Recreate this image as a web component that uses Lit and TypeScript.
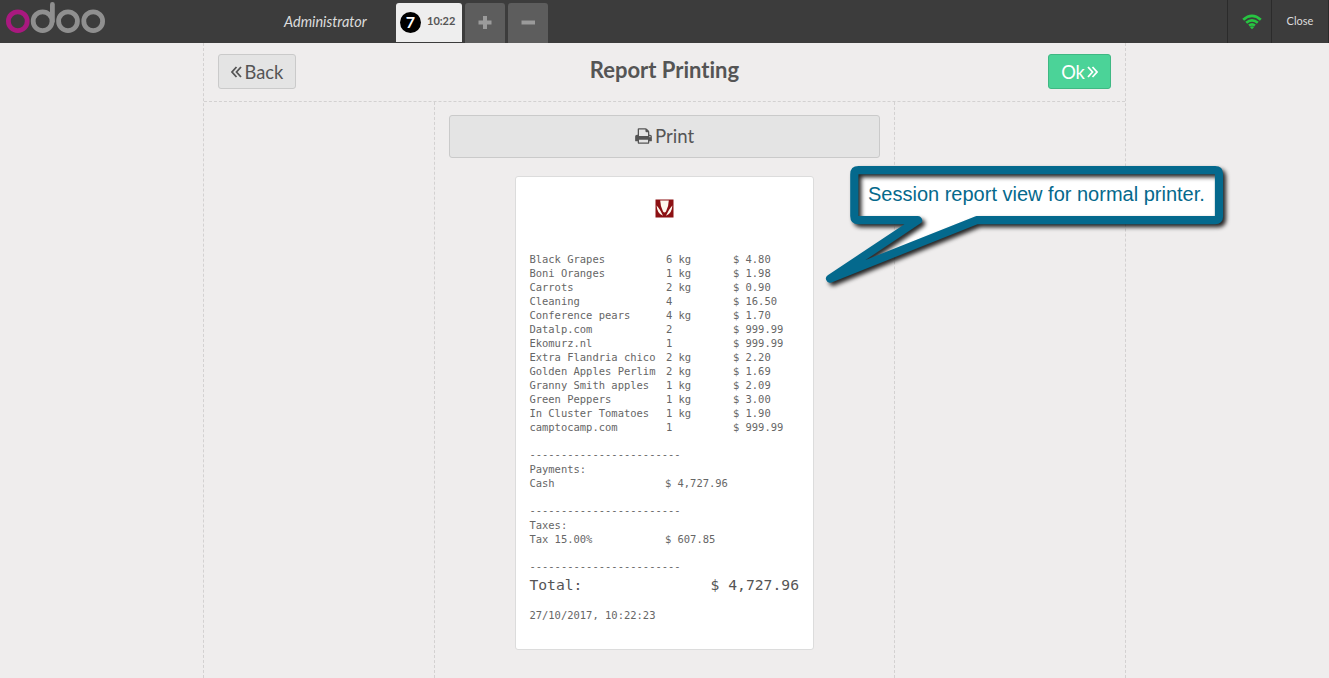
import { LitElement, html, css, svg } from "lit";
import { customElement } from "lit/decorators.js";

interface Line {
  name: string;
  qty: string;
  price: string;
}

const LINES: Line[] = [
  { name: "Black Grapes", qty: "6 kg", price: "$ 4.80" },
  { name: "Boni Oranges", qty: "1 kg", price: "$ 1.98" },
  { name: "Carrots", qty: "2 kg", price: "$ 0.90" },
  { name: "Cleaning", qty: "4", price: "$ 16.50" },
  { name: "Conference pears", qty: "4 kg", price: "$ 1.70" },
  { name: "Datalp.com", qty: "2", price: "$ 999.99" },
  { name: "Ekomurz.nl", qty: "1", price: "$ 999.99" },
  { name: "Extra Flandria chico", qty: "2 kg", price: "$ 2.20" },
  { name: "Golden Apples Perlim", qty: "2 kg", price: "$ 1.69" },
  { name: "Granny Smith apples", qty: "1 kg", price: "$ 2.09" },
  { name: "Green Peppers", qty: "1 kg", price: "$ 3.00" },
  { name: "In Cluster Tomatoes", qty: "1 kg", price: "$ 1.90" },
  { name: "camptocamp.com", qty: "1", price: "$ 999.99" },
];

const RULE = "-".repeat(24);

const chevrons = (d: string) => html`<svg class="chev" width="11" height="12" viewBox="0 0 11 12">
  ${svg`<path d=${d} fill="none" stroke="currentColor" stroke-width="1.8" />`}
</svg>`;

@customElement("pos-topbar")
export class PosTopbar extends LitElement {
  static styles = css`
    :host {
      display: flex;
      height: 43px;
      background: #3c3c3c;
      color: #ddd;
      font-family: Lato, sans-serif;
      font-variant-ligatures: none;
    }
    .logo {
      display: block;
      width: 284px;
      height: 43px;
    }
    .user {
      width: 112px;
      font-size: 14.5px;
      line-height: 44px;
      font-style: italic;
    }
    .orders {
      display: flex;
      gap: 3px;
      padding-top: 3px;
      flex: 1;
    }
    .order {
      box-sizing: border-box;
      width: 66px;
      height: 39px;
      padding-left: 4px;
      border-radius: 3px 3px 0 0;
      background: #eeeeee;
      display: flex;
      align-items: center;
      gap: 6px;
      color: #555;
      font-size: 11px;
      font-weight: 700;
      white-space: nowrap;
    }
    .num {
      width: 21px;
      height: 21px;
      line-height: 20px;
      border-radius: 50%;
      background: #000;
      color: #fff;
      text-align: center;
      font-size: 16px;
    }
    .time {
      padding-bottom: 4px;
    }
    .sq {
      width: 40px;
      height: 40px;
      border-radius: 3px 3px 0 0;
      background: #5d5d5d;
    }
    .wifi {
      box-sizing: border-box;
      width: 44px;
      border-left: 1px solid #2b2b2b;
    }
    .close {
      box-sizing: border-box;
      width: 58px;
      border-left: 1px solid #2b2b2b;
      border-right: 1px solid #2b2b2b;
      text-align: center;
      font-size: 11px;
      line-height: 42px;
    }
    svg {
      display: block;
    }
  `;

  render() {
    return html`
      <svg class="logo" viewBox="0 0 284 43" fill="none" stroke="#8f8f8f" stroke-width="4.8">
        <circle cx="17.8" cy="21.2" r="9.4" stroke="#a9197f" />
        <circle cx="42.6" cy="21.2" r="9.4" />
        <path d="M52.4 21.2V4.4" stroke-linecap="round" />
        <circle cx="68" cy="21.2" r="9.4" />
        <circle cx="93.2" cy="21.2" r="9.4" />
      </svg>
      <div class="user">Administrator</div>
      <div class="orders">
        <div class="order"><span class="num">7</span><span class="time">10:22</span></div>
        <div class="sq">
          <svg width="40" height="40" stroke="#9b9b9b" stroke-width="4">
            <path d="M13.5 19.5H26.5M20 13V26" />
          </svg>
        </div>
        <div class="sq">
          <svg width="40" height="40" stroke="#9b9b9b" stroke-width="4"><path d="M13.5 19.5H27" /></svg>
        </div>
      </div>
      <div class="wifi">
        <svg width="43" height="43" fill="none" stroke="#27c441" stroke-width="2.7">
          <path d="M15.2 19.7Q24 12 32.8 19.7M18.2 22.8Q24 17.8 29.8 22.8M21.1 25.6Q24 23.2 26.9 25.6" />
          <path d="M22 27.2Q24 25.4 26 27.2L24 29.2Z" fill="#27c441" stroke="none" />
        </svg>
      </div>
      <div class="close">Close</div>
    `;
  }
}

@customElement("session-receipt")
export class SessionReceipt extends LitElement {
  static styles = css`
    :host {
      display: block;
      box-sizing: border-box;
      width: 299px;
      height: 474px;
      padding: 22px 13px 0 13.4px;
      background: #fff;
      border: 1px solid #dcdcdc;
      border-radius: 3px;
      color: #666;
      font-family: "DejaVu Sans Mono", monospace;
      font-size: 10.48px;
      line-height: 14px;
      white-space: pre;
    }
    .mark {
      display: block;
      margin: 0 auto 34px;
    }
    .row {
      display: grid;
      grid-template-columns: 136.5px 67px 1fr;
      height: 14px;
    }
    .pay {
      grid-template-columns: 135.5px 1fr;
    }
    .rule {
      margin: 13px 0 1px;
      height: 14px;
    }
    .total {
      display: flex;
      justify-content: space-between;
      padding-right: 1px;
      font-size: 14.7px;
      line-height: 21px;
      height: 34px;
      color: #555;
    }
  `;

  render() {
    return html`<svg class="mark" width="19" height="19" viewBox="0 0 19 19">
        <rect x="0.5" y="0.5" width="18" height="18" fill="#8c1013" />
        <path d="M5.2 1.6H13.8Q13.6 8 11 12.6Q9.5 14.6 8 12.6Q5.4 8 5.2 1.6Z" fill="#fff8ee" />
        <path
          d="M1.6 6.5Q4.6 9.5 8 16.8Q2.2 15 1.6 6.5ZM17.4 6.5Q14.4 9.5 11 16.8Q16.8 15 17.4 6.5Z"
          fill="#fff8ee"
        />
      </svg>${LINES.map(
        (l) => html`<div class="row"><span>${l.name}</span><span>${l.qty}</span><span>${l.price}</span></div>`
      )}<div class="rule">${RULE}</div><div>Payments:</div><div class="row pay"><span>Cash</span><span>$ 4,727.96</span></div><div class="rule">${RULE}</div><div>Taxes:</div><div class="row pay"><span>Tax 15.00%</span><span>$ 607.85</span></div><div class="rule">${RULE}</div><div class="total"><span>Total:</span><span>$ 4,727.96</span></div><div>27/10/2017, 10:22:23</div>`;
  }
}

@customElement("callout-note")
export class CalloutNote extends LitElement {
  static styles = css`
    :host {
      position: absolute;
      left: 820px;
      top: 160px;
      width: 420px;
      height: 140px;
    }
    svg {
      position: absolute;
      inset: 0;
    }
    .edge {
      filter: drop-shadow(3px 3px 2px rgba(0, 0, 0, 0.85));
    }
    .text {
      position: absolute;
      left: 48px;
      top: 22px;
      font: 20px/24px "Liberation Sans", Arial, sans-serif;
      color: #05698c;
      white-space: nowrap;
    }
  `;

  render() {
    const d = "M38.5 10.2H395.2Q399 10.2 399 14V56.5Q399 60.2 395.2 60.2H156.5L10 118.6L98 60.2H38.5Q34.3 60.2 34.3 56V14.4Q34.3 10.2 38.5 10.2Z";
    return html`
      <svg width="420" height="140">
        <path d=${d} fill="#fff" />
        <path class="edge" d=${d} fill="none" stroke="#04698d" stroke-width="8.2" stroke-linejoin="round" />
      </svg>
      <div class="text">Session report view for normal printer.</div>
    `;
  }
}

@customElement("app-root")
export class AppRoot extends LitElement {
  static styles = css`
    :host {
      display: flex;
      flex-direction: column;
      position: relative;
      height: 678px;
      overflow: hidden;
      background: #efeded;
      color: #555;
      font-family: Lato, sans-serif;
      font-variant-ligatures: none;
    }
    .screen {
      box-sizing: border-box;
      width: 923px;
      flex: 1;
      margin: 0 auto;
      border: dashed #d3d1d1;
      border-width: 0 1px;
      display: flex;
      flex-direction: column;
    }
    .head {
      box-sizing: border-box;
      height: 59px;
      padding: 11px 14px 0;
      border-bottom: 1px dashed #d3d1d1;
      display: grid;
      grid-template-columns: 1fr auto 1fr;
      align-items: start;
    }
    .btn {
      box-sizing: border-box;
      height: 35px;
      border: 1px solid #cacaca;
      border-radius: 3px;
      background: #e4e4e4;
      display: flex;
      align-items: center;
      justify-content: center;
      gap: 3px;
      font-size: 18.3px;
    }
    .back {
      width: 78px;
    }
    .ok {
      width: 63px;
      gap: 2px;
      justify-self: end;
      color: #fff;
      background: #4bd398;
      border-color: #3fb883;
    }
    .title {
      margin: 0;
      font-size: 22px;
      line-height: 32px;
      font-weight: 700;
    }
    .center {
      box-sizing: border-box;
      width: 461px;
      flex: 1;
      margin: 0 auto;
      padding: 13px 14px 0;
      border: dashed #d3d1d1;
      border-width: 0 1px;
      display: flex;
      flex-direction: column;
      align-items: center;
      gap: 18px;
    }
    .print {
      width: 431px;
      height: 43px;
      padding-bottom: 1px;
      font-size: 18.6px;
    }
  `;

  render() {
    return html`
      <pos-topbar></pos-topbar>
      <div class="screen">
        <div class="head">
          <div class="btn back">${chevrons("M5.5 1L1 6L5.5 11M10 1L5.5 6L10 11")}<span>Back</span></div>
          <h1 class="title">Report Printing</h1>
          <div class="btn ok"><span>Ok</span>${chevrons("M1 1L5.5 6L1 11M5.5 1L10 6L5.5 11")}</div>
        </div>
        <div class="center">
          <div class="btn print">
            <svg width="17" height="18" viewBox="0 0 1664 1792" fill="currentColor">
              <path
                d="M384 1536h896v-256H384v256zm0-640h896V512h-160q-40 0-68-28t-28-68V256H384v640zm1152 64q0-26-19-45t-45-19-45 19-19 45 19 45 45 19 45-19 19-45zm128 0v416q0 13-9.5 22.5t-22.5 9.5h-224v160q0 40-28 68t-68 28H352q-40 0-68-28t-28-68v-160H32q-13 0-22.5-9.5T0 1376V960q0-79 56.5-135.5T192 768h64V224q0-40 28-68t68-28h672q40 0 88 20t76 48l152 152q28 28 48 76t20 88v256h64q79 0 135.5 56.5T1664 960z"
              />
            </svg>
            <span>Print</span>
          </div>
          <session-receipt></session-receipt>
        </div>
      </div>
      <callout-note></callout-note>
    `;
  }
}
